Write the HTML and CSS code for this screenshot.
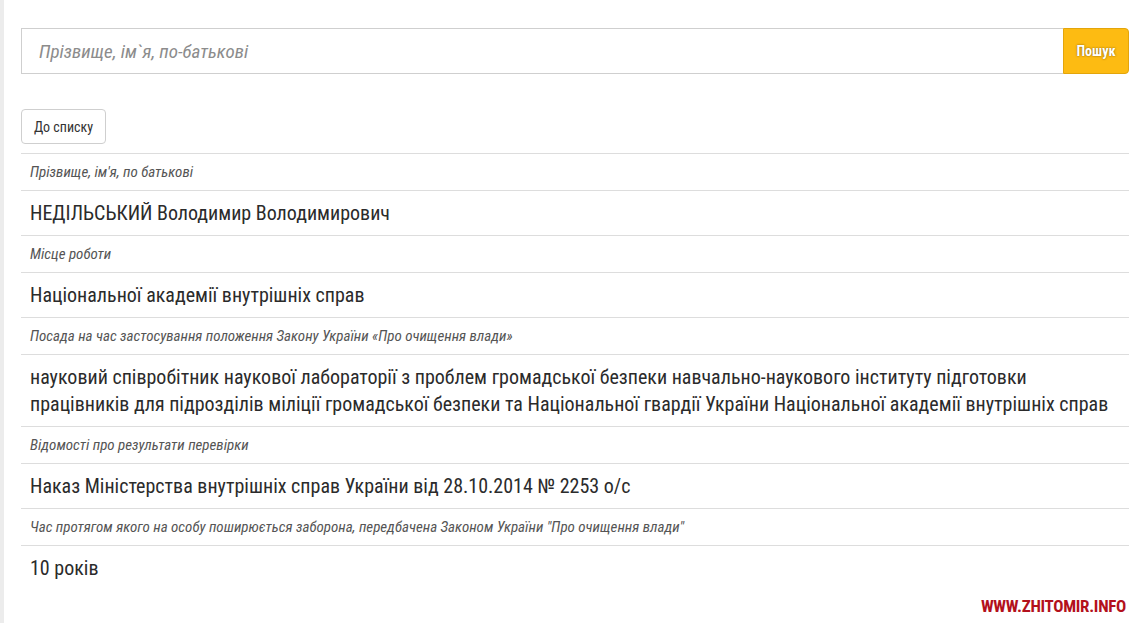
FILE: index.html
```html
<!DOCTYPE html>
<html lang="uk">
<head>
<meta charset="utf-8">
<title>Люстрація</title>
<link rel="stylesheet" href="styles.css">
</head>
<body>
<div class="page">
  <form class="search">
    <input class="search-input" type="text" placeholder="Прізвище, ім`я, по-батькові">
    <button class="search-btn" type="button">Пошук</button>
  </form>
  <button class="back-btn" type="button">До списку</button>
  <div class="details">
    <div class="row label">Прізвище, ім'я, по батькові</div>
    <div class="row value">НЕДІЛЬСЬКИЙ Володимир Володимирович</div>
    <div class="row label">Місце роботи</div>
    <div class="row value">Національної академії внутрішніх справ</div>
    <div class="row label">Посада на час застосування положення Закону України «Про очищення влади»</div>
    <div class="row value">науковий співробітник наукової лабораторії з проблем громадської безпеки навчально-наукового інституту підготовки працівників для підрозділів міліції громадської безпеки та Національної гвардії України Національної академії внутрішніх справ</div>
    <div class="row label">Відомості про результати перевірки</div>
    <div class="row value">Наказ Міністерства внутрішніх справ України від 28.10.2014 № 2253 о/с</div>
    <div class="row label">Час протягом якого на особу поширюється заборона, передбачена Законом України "Про очищення влади"</div>
    <div class="row value">10 років</div>
  </div>
</div>
<div class="watermark">WWW.ZHITOMIR.INFO</div>
</body>
</html>
```
FILE: styles.css
```css
html, body {
  margin: 0;
  height: 100%;
}
body {
  font-family: Roboto, "Liberation Sans", sans-serif;
  font-stretch: condensed;
  color: #333;
  background: #fff;
  overflow: hidden;
  position: relative;
}
.page {
  min-height: 100%;
  box-sizing: border-box;
  border-left: 4px solid #ececec;
  padding: 28px 10px 0 17px;
}
.search {
  display: flex;
  height: 46px;
  margin: 0;
}
.search-input {
  flex: 1;
  min-width: 0;
  box-sizing: border-box;
  height: 46px;
  border: 1px solid #cfcfcf;
  border-right: none;
  padding: 0 17px;
  font-family: inherit;
  font-stretch: condensed;
  font-size: 19px;
  font-style: italic;
  color: #555;
  outline: none;
}
.search-input::placeholder {
  color: #8c8c8c;
}
.search-btn {
  width: 66px;
  height: 46px;
  box-sizing: border-box;
  background: #fdbb12;
  border: 1px solid #e3a50b;
  border-radius: 0 4px 4px 0;
  color: #fff;
  font-family: inherit;
  font-stretch: condensed;
  font-weight: 700;
  font-size: 14px;
  text-shadow: 0 0 2px rgba(90, 60, 0, 0.8);
  padding: 0;
}
.back-btn {
  display: block;
  margin-top: 35px;
  height: 35px;
  width: 85px;
  box-sizing: border-box;
  background: #fff;
  border: 1px solid #cfcfcf;
  border-radius: 4px;
  font-family: inherit;
  font-stretch: condensed;
  font-size: 14px;
  color: #333;
  padding: 0;
}
.details {
  margin-top: 9px;
}
.row {
  border-top: 1px solid #dddddd;
  padding: 8px 9px;
}
.label {
  font-size: 15px;
  line-height: 20px;
  font-style: italic;
  color: #555;
}
.value {
  font-size: 20px;
  line-height: 27px;
  padding-top: 9px;
  color: #2b2b2b;
}
.watermark {
  position: absolute;
  right: 13px;
  bottom: 7px;
  font-family: Roboto, sans-serif;
  font-stretch: condensed;
  font-weight: 700;
  font-size: 17px;
  color: #b3111c;
  letter-spacing: -0.3px;
}
```
